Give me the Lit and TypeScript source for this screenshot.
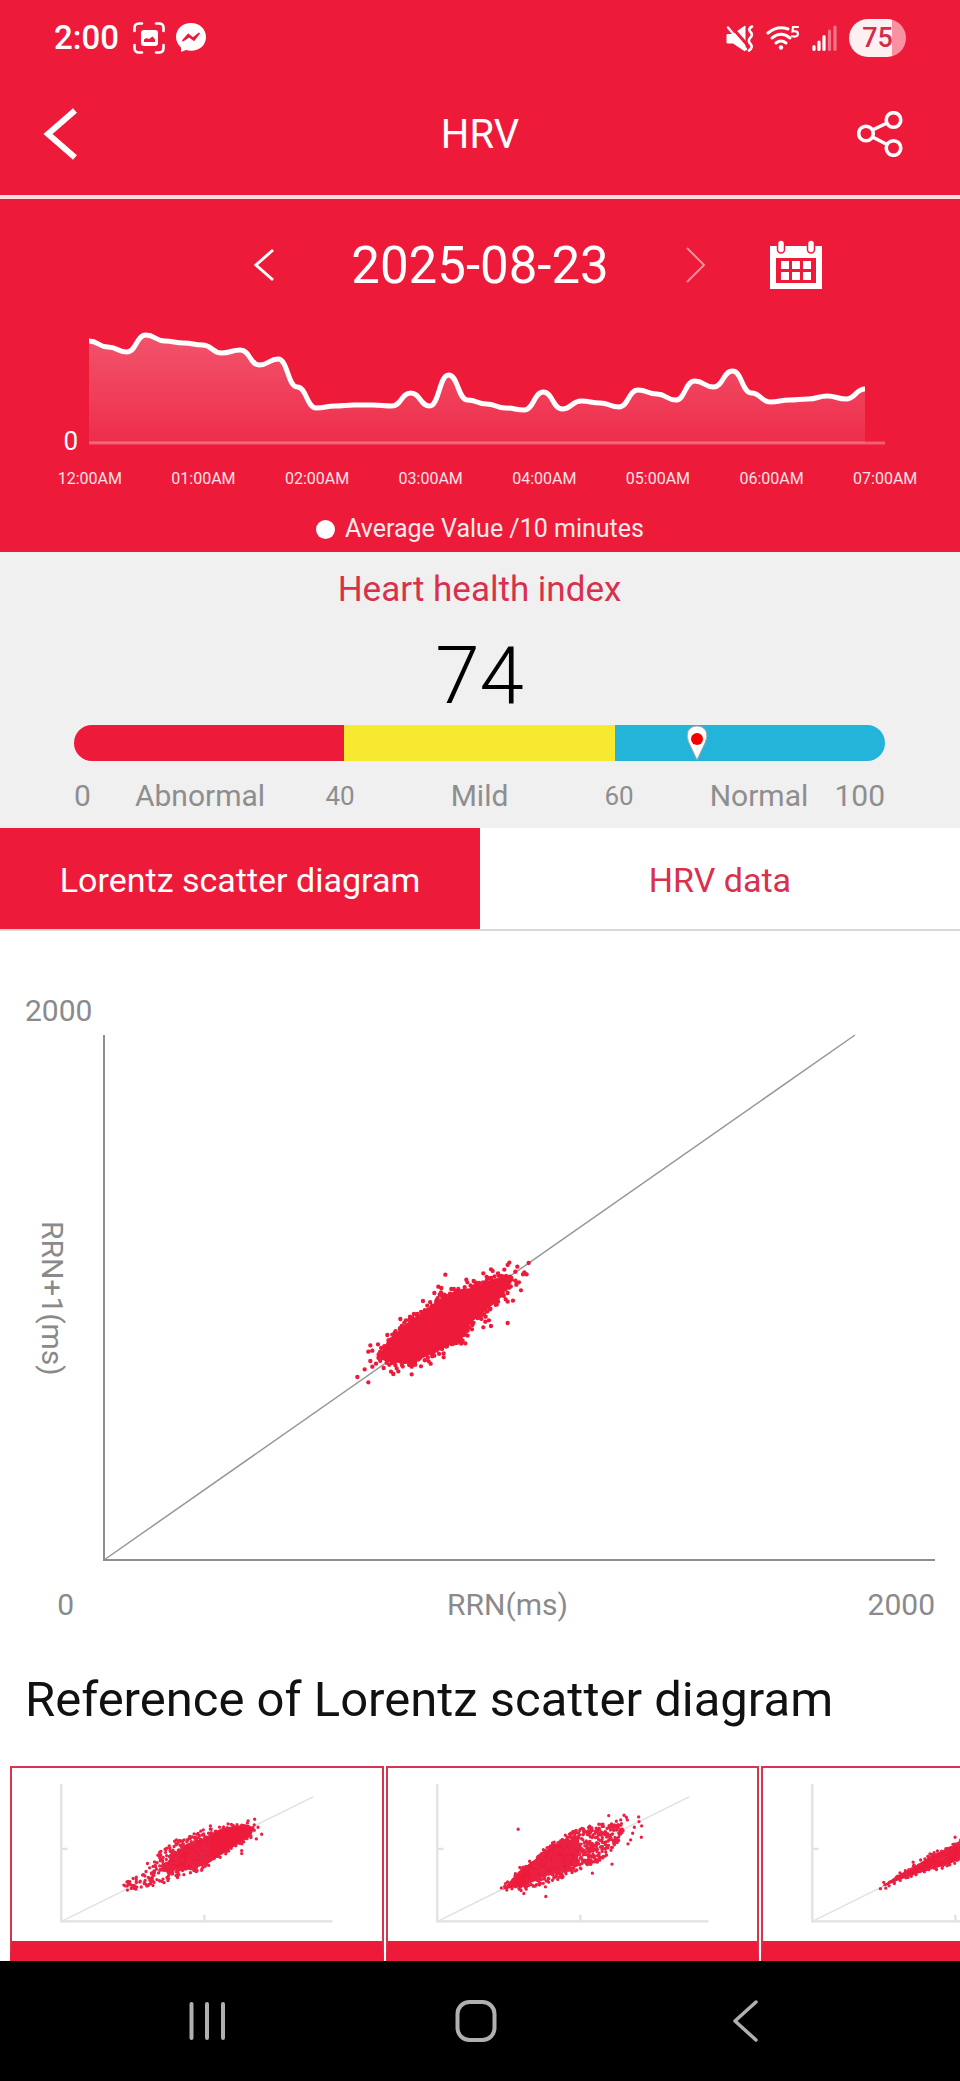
import { LitElement, html, svg, css } from "lit";
import { customElement, property, state } from "lit/decorators.js";
import { classMap } from "lit/directives/class-map.js";

type Point = [number, number];

/* Repeatable random numbers, so that a plot looks the same on each render. */
function createRandom(seed: number): () => number {
  let value = seed;
  return () => {
    value = (value * 1664525 + 1013904223) % 4294967296;
    return value / 4294967296;
  };
}

function contains(shape: Point[], x: number, y: number): boolean {
  let inside = false;
  for (let i = 0, j = shape.length - 1; i < shape.length; j = i++) {
    const [xi, yi] = shape[i];
    const [xj, yj] = shape[j];
    if (yi > y !== yj > y && x < ((xj - xi) * (y - yi)) / (yj - yi) + xi) {
      inside = !inside;
    }
  }
  return inside;
}

function fillWithDots(shape: Point[], count: number, seed: number): Point[] {
  if (!shape.length) return [];
  const random = createRandom(seed);
  const xs = shape.map((p) => p[0]);
  const ys = shape.map((p) => p[1]);
  const left = Math.min(...xs);
  const top = Math.min(...ys);
  const width = Math.max(...xs) - left;
  const height = Math.max(...ys) - top;
  const dots: Point[] = [];
  while (dots.length < count) {
    const x = left + random() * width;
    const y = top + random() * height;
    if (contains(shape, x, y)) dots.push([x, y]);
  }
  return dots;
}

function edgeDots(shape: Point[], step: number, jitter: number, seed: number): Point[] {
  const random = createRandom(seed);
  const dots: Point[] = [];
  shape.forEach(([x0, y0], i) => {
    const [x1, y1] = shape[(i + 1) % shape.length];
    const n = Math.ceil(Math.hypot(x1 - x0, y1 - y0) / step);
    for (let k = 0; k < n; k++) {
      const t = k / n;
      dots.push([
        x0 + (x1 - x0) * t + (random() - 0.5) * jitter,
        y0 + (y1 - y0) * t + (random() - 0.5) * jitter,
      ]);
    }
  });
  return dots;
}

const dotPath = (dots: Point[]) =>
  dots.map(([x, y]) => `M${x.toFixed(1)} ${y.toFixed(1)}h0`).join("");
const outline = (shape: Point[]) => shape.map((p) => p.join(",")).join(" ");

const AVERAGES: number[] = [
  102, 96, 91, 108, 102, 100, 98, 90, 93, 78, 84, 56, 35, 37, 38, 38, 37, 50, 37, 68, 43, 39, 35,
  33, 51, 34, 42, 40, 36, 53, 49, 43, 62, 56, 72, 50, 41, 43, 44, 47, 44, 54,
];

const HOURS = [
  "12:00AM", "01:00AM", "02:00AM", "03:00AM", "04:00AM", "05:00AM", "06:00AM", "07:00AM",
];

const CLUSTER: Point[] = [
  [120, 350], [130, 325], [175, 275], [205, 250], [250, 217], [280, 194], [300, 180], [350, 152],
  [400, 146], [440, 127], [480, 114], [505, 114], [518, 120], [512, 135], [498, 150], [478, 180],
  [458, 198], [438, 213], [418, 232], [400, 245], [383, 262], [376, 285], [355, 310], [330, 318],
  [290, 338], [250, 356], [225, 372], [195, 375], [165, 370], [137, 368],
];

const OUTLIERS: Point[] = [
  [316, 107], [249, 186], [181, 240], [142, 288], [91, 319], [85, 338], [97, 335], [114, 316],
  [91, 366], [97, 383], [74, 391], [52, 414], [85, 430], [131, 387], [153, 398], [160, 405],
  [175, 397], [170, 388], [215, 406], [215, 383], [243, 382], [266, 367], [272, 374], [311, 343],
  [311, 355], [283, 350], [503, 252], [453, 261], [430, 265], [447, 244], [436, 248], [437, 233],
  [396, 271], [543, 154], [503, 162], [503, 188], [519, 185], [497, 181], [560, 106], [553, 100],
  [549, 106], [566, 72], [508, 71], [503, 78], [532, 83], [526, 98], [537, 130], [529, 137],
  [493, 92], [453, 91], [458, 96], [430, 103], [401, 126], [379, 122], [382, 130], [334, 150],
  [295, 143], [304, 147], [283, 162], [303, 160], [293, 184], [299, 167], [232, 225], [210, 233],
  [198, 244], [440, 114], [474, 103], [376, 313], [368, 305], [355, 150], [108, 374], [116, 352],
];

interface Sample {
  name: string;
  core: Point[];
  loose: Point[];
  count: number;
  strays: Point[];
}

const SAMPLES: Sample[] = [
  {
    name: "Sample 1",
    core: [
      [485, 392], [515, 348], [560, 312], [610, 295], [660, 268], [700, 258], [745, 254],
      [763, 265], [753, 290], [720, 310], [680, 335], [650, 354], [620, 375], [580, 385],
      [540, 387], [510, 398],
    ],
    loose: [
      [365, 458], [372, 430], [430, 400], [480, 335], [540, 290], [640, 260], [620, 390],
      [560, 402], [510, 430], [440, 442],
    ],
    count: 300,
    strays: [
      [765, 238], [786, 283], [770, 297], [745, 243], [726, 341], [726, 332], [632, 258],
      [685, 252], [443, 371], [530, 300], [775, 262],
    ],
  },
  {
    name: "Sample 2",
    core: [
      [380, 450], [428, 395], [489, 350], [534, 312], [590, 298], [616, 325], [600, 375],
      [545, 398], [489, 415], [445, 440], [400, 445],
    ],
    loose: [
      [489, 345], [556, 290], [634, 257], [690, 250], [740, 250], [745, 285],
      [710, 328], [678, 362], [611, 390], [534, 425], [434, 453],
    ],
    count: 620,
    strays: [
      [427, 268], [699, 227], [789, 231], [797, 292], [510, 470], [509, 441], [444, 461],
      [709, 373], [650, 400], [745, 226], [432, 383], [798, 258], [752, 232], [735, 240],
      [722, 244], [755, 240], [790, 245], [776, 262], [765, 300], [757, 312], [771, 280],
    ],
  },
  {
    name: "Sample 3",
    core: [
      [392, 441], [438, 408], [494, 378], [549, 343], [616, 315], [700, 268], [760, 250],
      [740, 290], [660, 345], [593, 374], [527, 393], [460, 415],
    ],
    loose: [[540, 350], [620, 305], [740, 240], [740, 300], [640, 360], [540, 395]],
    count: 90,
    strays: [[487, 367], [613, 292], [560, 333]],
  },
];

@customElement("average-chart")
export class AverageChart extends LitElement {
  @property({ attribute: false }) values: number[] = [];

  static styles = css`
    :host { display: block; }
    .plot { display: block; width: 100%; height: auto; }
  `;

  private get curve(): string {
    const pts = this.values.map((v, i) => [(i * 776) / (this.values.length - 1), 118 - v]);
    return pts.reduce((path, [x, y], i) => {
      if (i === 0) return `M${x} ${y}`;
      const [px, py] = pts[i - 1];
      const mid = (px + x) / 2;
      return `${path}C${mid} ${py} ${mid} ${y} ${x} ${y}`;
    }, "");
  }

  render() {
    const curve = this.curve;
    return html`
      <svg class="plot" viewBox="0 0 796 120" role="img" aria-label="Average value per 10 minutes">
        <defs>
          <linearGradient id="fade" x1="0" y1="0" x2="0" y2="120" gradientUnits="userSpaceOnUse">
            <stop offset="0" stop-color="#fff" stop-opacity="0.27" />
            <stop offset="1" stop-color="#fff" stop-opacity="0.08" />
          </linearGradient>
        </defs>
        <path d="${curve}V118H0Z" fill="url(#fade)" />
        <path d="M0 118H796" stroke="#fff" stroke-opacity="0.3" stroke-width="3" />
        <path d=${curve} fill="none" stroke="#fff" stroke-width="5" stroke-linejoin="round" />
      </svg>
    `;
  }
}

@customElement("lorentz-plot")
export class LorentzPlot extends LitElement {
  static styles = css`
    :host { display: block; }
    .plot { display: block; width: 100%; height: auto; overflow: visible; }
  `;

  render() {
    const dots = [...edgeDots(CLUSTER, 6, 18, 7), ...OUTLIERS];
    return html`
      <svg class="plot" viewBox="0 0 832 526" role="img" aria-label="Lorentz scatter diagram">
        <path d="M1 525L752 0" fill="none" stroke="#979797" stroke-width="1.5" />
        <path d="M1 0V525H832" fill="none" stroke="#8e8e8e" stroke-width="2" />
        <g transform="translate(237 204) scale(0.3333)">
          <polygon points=${outline(CLUSTER)} fill="#ed1a3a" />
          <path d=${dotPath(dots)} stroke="#ed1a3a" stroke-width="13" stroke-linecap="round" />
        </g>
      </svg>
    `;
  }
}

@customElement("sample-card")
export class SampleCard extends LitElement {
  @property({ attribute: false }) sample!: Sample;
  @property({ type: Number }) seed = 1;

  static styles = css`
    :host { display: block; box-sizing: border-box; border: 2px solid #d8344e; border-bottom: 20px solid #ed1a3a; background: #fff; }
    .plot { display: block; width: 100%; height: auto; }
  `;

  render() {
    const { name, core, loose, count, strays } = this.sample;
    const dots = [
      ...edgeDots(core, 9, 14, this.seed),
      ...fillWithDots(loose, count, this.seed + 5),
      ...strays,
    ];
    return html`
      <svg class="plot" viewBox="36 84 1110 519" role="img" aria-label=${name}>
        <path d="M186 544L942 170" stroke="#e2e2e2" stroke-width="5" />
        <path d="M184 132V545H999M184 327H203M614 545V525" fill="none" stroke="#e2e2e2" stroke-width="7" />
        <polygon points=${outline(core)} fill="#ed1a3a" />
        <path d=${dotPath(dots)} stroke="#ea2142" stroke-width="10" stroke-linecap="round" />
      </svg>
    `;
  }
}

const scanIcon = svg`
  <g fill="none" stroke="#fff" stroke-width="2.6" stroke-linecap="round">
    <path d="M1.5 9V6Q1.5 1.500 6 1.500H9M23 1.500H26Q30.500 1.500 30.500 6V9M30.500 23V26Q30.500 30.500 26 30.500H23M9 30.500H6Q1.500 30.500 1.500 26V23" />
  </g>
  <rect x="8" y="8" width="17" height="16" rx="3" fill="#fff" />
  <path d="M11 20V17.500L13.500 16L16 17L19.500 14.500L22 17.500V20Z" fill="#ed1a3a" />`;

const chatIcon = svg`
  <path d="M16 1C7.500 1 1 7 1 15C1 19.300 3 22.800 6 25.400V30L11 28C12.600 28.500 14.300 28.800 16 28.800C24.500 28.800 31 23 31 15C31 7 24.500 1 16 1Z" fill="#fff" />
  <path d="M8 18.500L13.200 12.500L18 16.500L24 11.500L19 18L14.200 14.500Z" fill="#ed1a3a" stroke="#ed1a3a" stroke-width="1.800" stroke-linejoin="round" />`;

const muteIcon = svg`
  <path d="M1 9.500H7L19 1V26L7 18H1Z" fill="#fff" stroke="#fff" stroke-width="1" stroke-linejoin="round" />
  <path d="M3.500 -0.500L21 19.500" stroke="#ed1a3a" stroke-width="3" />
  <path d="M2 2.500L20 24" stroke="#fff" stroke-width="2.400" stroke-linecap="round" />
  <path d="M26 1.500Q21.500 4 24.500 7Q27.500 10 24 13Q21.500 16 24.500 19Q27.500 22 23 25.500" fill="none" stroke="#fff" stroke-width="2.600" stroke-linecap="round" />`;

const wifiIcon = svg`
  <g fill="none" stroke="#fff" stroke-width="3" stroke-linecap="round">
    <path d="M2 8Q11.500 0 22 4" />
    <path d="M6 13Q15 5.500 24 13" />
    <path d="M10 18Q15 14 20 18" />
    <path d="M32 2H27L26.500 6.500Q32 5.500 32 9Q31.500 12.500 26 11.200" stroke-width="2.200" />
  </g>
  <circle cx="15" cy="22.500" r="2.200" fill="#fff" />`;

const signalIcon = svg`
  <g stroke="#fff" stroke-width="3.200" stroke-linecap="round">
    <path d="M2 21.500V24.500M7 17V24.500M12 11.500V24.500" />
    <path d="M17.500 6V24.500M23 2V24.500" stroke-opacity="0.4" />
  </g>`;

@customElement("app-root")
export class AppRoot extends LitElement {
  @state() private tab = 0;

  static styles = css`
    :host {
      display: block;
      background: #fff;
      color: #111;
      font-family: Roboto, "Noto Sans", sans-serif;
      overflow: hidden;
    }
    * { box-sizing: border-box; }
    h1, h2, p { margin: 0; font-weight: 400; }
    button { margin: 0; padding: 0; border: 0; background: none; color: inherit; font: inherit; cursor: pointer; }
    svg { display: block; }
    .top { background: #ed1a3a; color: #fff; }
    .status { display: flex; align-items: center; justify-content: space-between; height: 76px; padding: 0 54px; }
    .group { display: flex; align-items: center; gap: 12px; }
    .start { gap: 10px; }
    .clock { font-size: 33px; font-weight: 500; line-height: 40px; padding-right: 4px; }
    .battery { display: grid; place-items: center; width: 57px; height: 38px; border-radius: 19px; background: linear-gradient(90deg, #fdf0f2 76%, #f892a2 76%); color: #d32b49; font-size: 27px; font-weight: 500; }
    .bar { display: grid; grid-template-columns: 1fr auto 1fr; align-items: center; height: 119px; padding: 0 50px 4px 30px; }
    .title { padding: 2px 0 0 20px; font-size: 40px; line-height: 48px; }
    .icon-button { display: grid; place-items: center; width: 60px; height: 60px; }
    .bar-end { justify-self: end; }
    .divider { height: 4px; background: #fbdde2; }
    .dates { display: grid; grid-template-columns: 1fr 60px 372px 60px 1fr; align-items: center; height: 126px; padding-top: 6px; }
    .date { padding-top: 2px; font-size: 51px; line-height: 60px; text-align: center; }
    .calendar { margin-left: 40px; }
    .trend { display: flex; align-items: flex-end; padding-right: 75px; }
    .trend-zero { width: 89px; padding-right: 11px; text-align: right; font-size: 26px; line-height: 28px; margin-bottom: -10px; }
    .trend-chart { flex: 1; }
    .hours { display: grid; grid-template-columns: repeat(8, 1fr); padding: 22px 18px 0 33px; font-size: 16px; line-height: 24px; text-align: center; color: #ffe3e7; }
    .legend { display: flex; align-items: center; justify-content: center; gap: 10px; padding: 23px 0 8px; font-size: 25px; line-height: 30px; color: #ffe9ec; }
    .legend-dot { width: 19px; height: 19px; border-radius: 50%; background: #fff; }
    .health { padding: 18px 75px 14px 74px; background: #f0f0f0; text-align: center; }
    .health-title { font-size: 35px; line-height: 40px; color: #d9304c; }
    .score { font-size: 80px; font-weight: 300; line-height: 80px; padding: 26px 0 9px; color: #000; }
    .gauge { position: relative; display: grid; grid-template-columns: repeat(3, 1fr); height: 36px; border-radius: 18px; overflow: hidden; }
    .low { background: #ed1a3a; }
    .mid { background: #f7e930; }
    .high { background: #24b3d9; }
    .pin { position: absolute; top: 0; transform: translateX(-50%); }
    .scale { display: grid; grid-template-columns: 52fr 148fr 132fr 147fr 132fr 148fr 52fr; align-items: center; padding-top: 17px; font-size: 30px; line-height: 36px; color: #8e8e8e; white-space: nowrap; }
    .scale-start { text-align: left; }
    .scale-end { justify-self: end; }
    .limit { font-size: 26px; }
    .tabs { display: grid; grid-template-columns: 1fr 1fr; border-bottom: 2px solid #d8d8d8; }
    .tab { height: 101px; padding-top: 3px; font-size: 34px; line-height: 40px; color: #d9304c; }
    .tab.active { background: #ed1a3a; color: #fff; }
    .diagram { padding: 62px 25px 0 0; color: #8a8a8a; font-size: 30px; line-height: 36px; }
    .y-max { padding-left: 25px; }
    .plot-row { display: grid; grid-template-columns: 103px 1fr; align-items: center; padding-top: 6px; }
    .y-name { justify-self: center; writing-mode: vertical-rl; }
    .x-axis { display: grid; grid-template-columns: 80px 1fr auto 1fr; padding-top: 26px; text-align: right; }
    .x-zero { padding-right: 6px; }
    .x-name { grid-column: 3; }
    .reference-title { padding: 47px 25px 0; font-size: 49px; line-height: 60px; white-space: nowrap; }
    .samples { display: flex; gap: 2px; padding: 36px 0 0 10px; overflow: hidden; }
    .sample { flex: 0 0 calc(39% + 3px); }
    .nav { display: grid; grid-template-columns: repeat(3, 1fr); height: 121px; padding: 0 80px 0 72px; background: #000; }
    .nav-button { display: grid; place-items: center; }
  `;

  private renderTab(index: number, label: string) {
    return html`
      <button
        class=${classMap({ tab: true, active: this.tab === index })}
        role="tab"
        aria-selected=${this.tab === index ? "true" : "false"}
        @click=${() => (this.tab = index)}
      >${label}</button>
    `;
  }

  render() {
    return html`
      <header class="top">
        <div class="status">
          <div class="group start">
            <span class="clock">2:00</span>
            <svg width="32" height="32" viewBox="0 0 32 32">${scanIcon}</svg>
            <svg width="32" height="32" viewBox="0 0 32 32">${chatIcon}</svg>
          </div>
          <div class="group">
            <svg width="28" height="27" viewBox="0 0 28 27">${muteIcon}</svg>
            <svg width="34" height="27" viewBox="0 0 34 27">${wifiIcon}</svg>
            <svg width="25" height="27" viewBox="0 0 25 27">${signalIcon}</svg>
            <span class="battery">75</span>
          </div>
        </div>
        <div class="bar">
          <button class="icon-button" aria-label="Back">
            <svg width="34" height="52" viewBox="0 0 34 52">
              <path d="M32 2.500L5 26L32 49.500" fill="none" stroke="#fff" stroke-width="6" />
            </svg>
          </button>
          <h1 class="title">HRV</h1>
          <button class="icon-button bar-end" aria-label="Share">
            <svg width="46" height="46" viewBox="0 0 46 46" fill="none" stroke="#fff" stroke-width="3.600">
              <circle cx="9" cy="22.500" r="7.300" />
              <circle cx="36.500" cy="9" r="7.300" />
              <circle cx="36.500" cy="37" r="7.300" />
              <path d="M15.500 19L30 12M15.500 26L30 33.500" />
            </svg>
          </button>
        </div>
        <div class="divider"></div>
        <div class="dates">
          <span></span>
          <button class="icon-button" aria-label="Previous day">
            <svg width="22" height="34" viewBox="0 0 22 34">
              <path d="M20 2L3 17L20 32" fill="none" stroke="#fff" stroke-width="3" />
            </svg>
          </button>
          <time class="date" datetime="2025-08-23">2025-08-23</time>
          <button class="icon-button" aria-label="Next day">
            <svg width="22" height="36" viewBox="0 0 22 36">
              <path d="M2 1L19 18L2 35" fill="none" stroke="#fff" stroke-opacity="0.5" stroke-width="2" />
            </svg>
          </button>
          <button class="icon-button calendar" aria-label="Choose a date">
            <svg width="52" height="50" viewBox="0 0 52 50">
              <path d="M0 6H52V49H0ZM6 18V43H46V18Z" fill="#fff" fill-rule="evenodd" />
              <g fill="#fff" stroke="#ed1a3a" stroke-width="1.500">
                <rect x="7.500" y="0" width="7" height="13" rx="3.500" />
                <rect x="37.500" y="0" width="7" height="13" rx="3.500" />
              </g>
              <path d="M11 21h8v8h-8zM22 21h8v8h-8zM33 21h8v8h-8zM11 32h8v8h-8zM22 32h8v8h-8zM33 32h8v8h-8z" fill="#fff" />
            </svg>
          </button>
        </div>
        <div class="trend">
          <span class="trend-zero">0</span>
          <average-chart class="trend-chart" .values=${AVERAGES}></average-chart>
        </div>
        <div class="hours">${HOURS.map((hour) => html`<span>${hour}</span>`)}</div>
        <p class="legend"><span class="legend-dot"></span>Average Value /10 minutes</p>
      </header>

      <section class="health">
        <h2 class="health-title">Heart health index</h2>
        <p class="score">74</p>
        <div class="gauge">
          <span class="low"></span><span class="mid"></span><span class="high"></span>
          <svg class="pin" style="left: ${(2 / 3 + (74 - 60) / 40 / 3 - 0.015) * 100}%" width="22" height="36" viewBox="0 0 22 36">
            <path d="M11 35L2.500 17Q0 11 2 6Q5 1 11 1Q17 1 20 6Q22 11 19.500 17Z" fill="#fff" stroke="#9aa4a8" stroke-width="1" />
            <circle cx="11" cy="14" r="6" fill="#f70000" />
          </svg>
        </div>
        <div class="scale">
          <span class="scale-start">0</span>
          <span>Abnormal</span>
          <span class="limit">40</span>
          <span>Mild</span>
          <span class="limit">60</span>
          <span>Normal</span>
          <span class="scale-end">100</span>
        </div>
      </section>

      <div class="tabs" role="tablist">
        ${this.renderTab(0, "Lorentz scatter diagram")}${this.renderTab(1, "HRV data")}
      </div>

      <section class="diagram">
        <div class="y-max">2000</div>
        <div class="plot-row">
          <span class="y-name">RRN+1(ms)</span>
          <lorentz-plot></lorentz-plot>
        </div>
        <div class="x-axis">
          <span class="x-zero">0</span>
          <span class="x-name">RRN(ms)</span>
          <span>2000</span>
        </div>
      </section>

      <section>
        <h2 class="reference-title">Reference of Lorentz scatter diagram</h2>
        <div class="samples">
          ${SAMPLES.map(
            (sample, i) => html`<sample-card class="sample" .sample=${sample} .seed=${i * 31 + 11}></sample-card>`
          )}
        </div>
      </section>

      <nav class="nav">
        <button class="nav-button" aria-label="Recent apps">
          <svg width="40" height="40" viewBox="0 0 40 40">
            <path d="M4.500 3V37M20 3V37M36 3V37" stroke="#b0b0b0" stroke-width="4" stroke-linecap="round" />
          </svg>
        </button>
        <button class="nav-button" aria-label="Home">
          <svg width="42" height="42" viewBox="0 0 42 42">
            <rect x="2.500" y="2" width="37" height="38" rx="12" fill="none" stroke="#b0b0b0" stroke-width="4" />
          </svg>
        </button>
        <button class="nav-button" aria-label="Back">
          <svg width="26" height="42" viewBox="0 0 26 42">
            <path d="M24 2L3 21L24 40" fill="none" stroke="#b0b0b0" stroke-width="3.500" stroke-linecap="round" stroke-linejoin="round" />
          </svg>
        </button>
      </nav>
    `;
  }
}
